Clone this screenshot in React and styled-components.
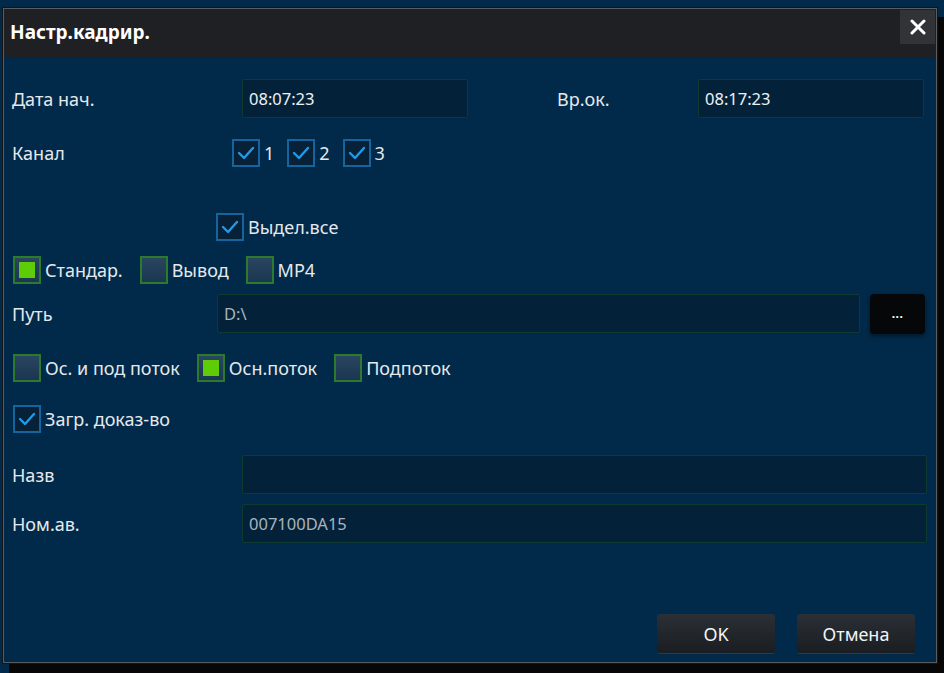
import React from "react";
import styled, { createGlobalStyle } from "styled-components";

const GlobalStyle = createGlobalStyle`
  html, body {
    margin: 0;
    padding: 0;
    background: #01294a;
  }
  body {
    font-family: "Noto Sans", "Open Sans", sans-serif;
    color: #e6e9ec;
  }
`;

const Page = styled.div`
  width: 944px;
  height: 673px;
  box-sizing: border-box;
  padding: 8px 7px 10px 3px;
  overflow: hidden;
`;

const Window = styled.div`
  height: 100%;
  box-sizing: border-box;
  display: flex;
  flex-direction: column;
  background: #012a4a;
  border: 1px solid #5a5c60;
  box-shadow: 0 0 0 1px #141414, 7px 10px 0 1px #070707;
`;

const TitleBar = styled.div`
  height: 49px;
  flex: none;
  display: flex;
  align-items: flex-start;
  justify-content: space-between;
  background: #1f2023;
  padding-left: 6px;
  padding-right: 1px;
`;

const Title = styled.div`
  font-size: 19px;
  font-weight: 700;
  color: #ffffff;
  line-height: 47px;
`;

const CloseButton = styled.div`
  width: 35px;
  height: 34px;
  margin-top: 1px;
  display: flex;
  align-items: center;
  justify-content: center;
  background: #313337;
`;

const Body = styled.div`
  flex: 1;
  display: flex;
  flex-direction: column;
  padding: 21px 9px 8px 8px;
`;

const Row = styled.div`
  display: flex;
  align-items: center;
  height: ${(p) => p.$h || 28}px;
  margin-top: ${(p) => p.$mt || 0}px;
  margin-left: ${(p) => p.$ml || 0}px;
  gap: ${(p) => p.$gap || 0}px;
`;

const Label = styled.div`
  width: ${(p) => p.$w}px;
  margin-left: ${(p) => p.$ml || 0}px;
  flex: none;
  font-size: 18px;
  color: #e6e9ec;
`;

const Field = styled.div`
  box-sizing: border-box;
  height: 39px;
  width: ${(p) => (p.$w ? `${p.$w}px` : "auto")};
  flex: ${(p) => (p.$w ? "none" : 1)};
  display: flex;
  align-items: center;
  padding-left: 6px;
  background: #03223a;
  border: 1px solid #0e3a30;
  border-radius: 2px;
  font-size: 16.5px;
  color: ${(p) => (p.$dim ? "#aab3bb" : "#eef1f3")};
`;

const BrowseButton = styled.div`
  width: 55px;
  height: 40px;
  margin-left: 10px;
  margin-right: 2px;
  flex: none;
  display: flex;
  align-items: center;
  justify-content: center;
  background: #050709;
  border-radius: 4px;
  box-shadow: 0 2px 4px rgba(0, 0, 0, 0.5);
  color: #ffffff;
  font-size: 12px;
  font-weight: 700;
  letter-spacing: 0.5px;
`;

const Item = styled.div`
  display: flex;
  align-items: center;
  gap: 4px;
  font-size: 18px;
  color: #e6e9ec;
`;

const Box = styled.div`
  width: 28px;
  height: 28px;
  box-sizing: border-box;
  flex: none;
  display: flex;
  align-items: center;
  justify-content: center;
  border: 2px solid ${(p) => (p.$green ? "#2c7a2c" : "#14659f")};
  background: ${(p) =>
    p.$green ? "linear-gradient(#2a4560, #1b3650)" : "#072139"};
`;

const Fill = styled.div`
  width: 16px;
  height: 16px;
  background: #5ccd06;
`;

const Footer = styled.div`
  margin-top: auto;
  display: flex;
  justify-content: flex-end;
  gap: 22px;
  padding-right: 12px;
`;

const Button = styled.div`
  width: 118px;
  height: 40px;
  box-sizing: border-box;
  display: flex;
  align-items: center;
  justify-content: center;
  background: linear-gradient(#2b3036, #1a1d21);
  border-radius: 3px;
  border-bottom: 1px solid #1f4a1f;
  font-size: 18px;
  color: #f2f4f6;
`;

function Check() {
  return (
    <svg width="20" height="20" viewBox="0 0 20 20">
      <polyline
        points="3,10 8,15 17,5"
        fill="none"
        stroke="#1f9be8"
        strokeWidth="2.4"
        strokeLinecap="round"
        strokeLinejoin="round"
      />
    </svg>
  );
}

function CheckItem({ label, checked }) {
  return (
    <Item>
      <Box>{checked && <Check />}</Box>
      {label}
    </Item>
  );
}

function Option({ label, on }) {
  return (
    <Item>
      <Box $green>{on && <Fill />}</Box>
      {label}
    </Item>
  );
}

export default function App() {
  return (
    <Page>
      <GlobalStyle />
      <Window>
        <TitleBar>
          <Title>Настр.кадрир.</Title>
          <CloseButton>
            <svg width="16" height="16" viewBox="0 0 16 16">
              <path
                d="M2 2 L14 14 M14 2 L2 14"
                stroke="#ffffff"
                strokeWidth="3"
                strokeLinecap="round"
              />
            </svg>
          </CloseButton>
        </TitleBar>
        <Body>
          <Row $h={39}>
            <Label $w={230}>Дата нач.</Label>
            <Field $w={226}>08:07:23</Field>
            <Label $w={141} $ml={89}>
              Вр.ок.
            </Label>
            <Field $w={226}>08:17:23</Field>
          </Row>

          <Row $mt={21}>
            <Label $w={220}>Канал</Label>
            <Row $gap={13}>
              <CheckItem label="1" checked />
              <CheckItem label="2" checked />
              <CheckItem label="3" checked />
            </Row>
          </Row>

          <Row $mt={46} $ml={204}>
            <CheckItem label="Выдел.все" checked />
          </Row>

          <Row $mt={15} $ml={1} $gap={17}>
            <Option label="Стандар." on />
            <Option label="Вывод" />
            <Option label="MP4" />
          </Row>

          <Row $mt={9} $h={41}>
            <Label $w={205}>Путь</Label>
            <Field $dim>D:\</Field>
            <BrowseButton>...</BrowseButton>
          </Row>

          <Row $mt={20} $ml={1} $gap={17}>
            <Option label="Ос. и под поток" />
            <Option label="Осн.поток" on />
            <Option label="Подпоток" />
          </Row>

          <Row $mt={23} $ml={1}>
            <CheckItem label="Загр. доказ-во" checked />
          </Row>

          <Row $mt={22} $h={39}>
            <Label $w={230}>Назв</Label>
            <Field />
          </Row>

          <Row $mt={10} $h={39}>
            <Label $w={230}>Ном.ав.</Label>
            <Field $dim>007100DA15</Field>
          </Row>

          <Footer>
            <Button>OK</Button>
            <Button>Отмена</Button>
          </Footer>
        </Body>
      </Window>
    </Page>
  );
}
